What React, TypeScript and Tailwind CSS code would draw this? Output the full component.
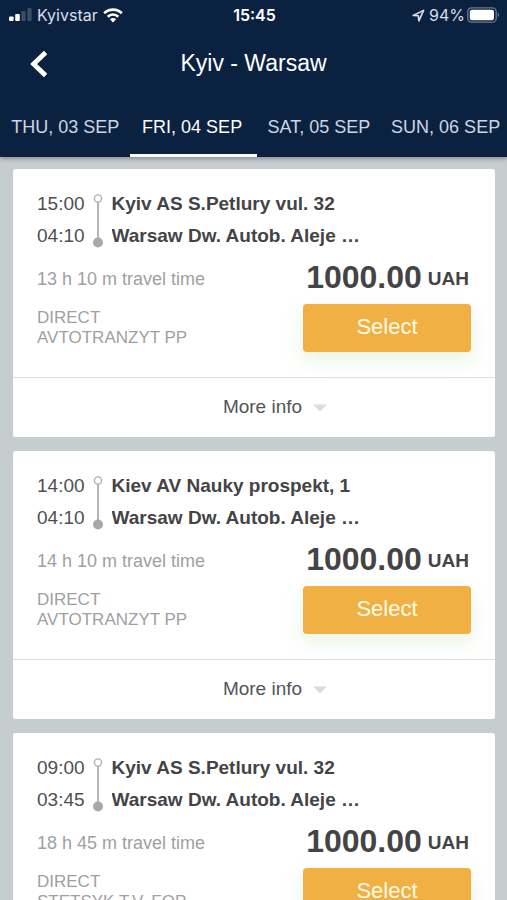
import clsx from 'clsx'

const days = ['THU, 03 SEP', 'FRI, 04 SEP', 'SAT, 05 SEP', 'SUN, 06 SEP']
const activeDay = 'FRI, 04 SEP'

const trips = [
  {
    id: 1,
    departure: '15:00',
    arrival: '04:10',
    from: 'Kyiv AS S.Petlury vul. 32',
    to: 'Warsaw Dw. Autob. Aleje …',
    duration: '13 h 10 m travel time',
    carrier: 'AVTOTRANZYT PP',
    price: '1000.00'
  },
  {
    id: 2,
    departure: '14:00',
    arrival: '04:10',
    from: 'Kiev AV Nauky prospekt, 1',
    to: 'Warsaw Dw. Autob. Aleje …',
    duration: '14 h 10 m travel time',
    carrier: 'AVTOTRANZYT PP',
    price: '1000.00'
  },
  {
    id: 3,
    departure: '09:00',
    arrival: '03:45',
    from: 'Kyiv AS S.Petlury vul. 32',
    to: 'Warsaw Dw. Autob. Aleje …',
    duration: '18 h 45 m travel time',
    carrier: 'STETSYK T.V. FOP',
    price: '1000.00'
  }
]

type Trip = (typeof trips)[number]

function StatusBar() {
  return (
    <div className="grid grid-cols-3 items-center h-[30px] pl-[9px] pr-[7px] text-base leading-5 font-['Inter','Liberation_Sans',sans-serif]">
      <div className="flex items-center gap-[5px] text-[#d9deea]">
        <svg width="23" height="14" viewBox="0 0 23 14" fill="#fff" aria-hidden="true">
          <rect x="0" y="8.5" width="4.6" height="4.5" rx="1" />
          <rect x="6.2" y="6" width="4.6" height="7" rx="1" />
          <rect x="12.4" y="3" width="4.2" height="10" rx="1" opacity="0.2" />
          <rect x="18.4" y="0" width="4.2" height="13" rx="1" opacity="0.2" />
        </svg>
        <span>Kyivstar</span>
        <svg width="20" height="15" viewBox="0 0 20 15" aria-hidden="true">
          <path d="M1.2 5.2A12.6 12.6 0 0 1 18.8 5.2" fill="none" stroke="#fff" strokeWidth="2.7" />
          <path d="M4.7 8.7A7.6 7.6 0 0 1 15.3 8.7" fill="none" stroke="#fff" strokeWidth="2.6" />
          <path d="M10 14.4L6.9 11.3A4.4 4.4 0 0 1 13.1 11.3Z" fill="#fff" />
        </svg>
      </div>
      <span className="text-center font-semibold text-white">15:45</span>
      <div className="flex items-center justify-end text-[#d9deea]">
        <svg className="mr-1" width="13" height="13" viewBox="0 0 13 13" aria-hidden="true">
          <path d="M1.2 6.5L11.6 1.4L6.9 11.8L6.3 6.8Z" fill="none" stroke="#d9deea" strokeWidth="1.6" strokeLinejoin="round" />
        </svg>
        <span>94%</span>
        <svg className="ml-0.5" width="33" height="16" viewBox="0 0 33 16" aria-hidden="true">
          <rect x="0.8" y="0.8" width="28.4" height="14.4" rx="4" fill="none" stroke="#6d7a8f" strokeWidth="1.3" />
          <rect x="2.8" y="2.8" width="24.2" height="10.4" rx="2.2" fill="#fff" />
          <path d="M30.8 5.6C32.6 6.4 32.6 9.6 30.8 10.4Z" fill="#6d7a8f" />
        </svg>
      </div>
    </div>
  )
}

function Header() {
  return (
    <header className="relative z-10 shrink-0 bg-[#0a2240] shadow-[0_1px_5px_rgba(0,0,0,0.4)]">
      <StatusBar />
      <div className="grid grid-cols-[56px_1fr_56px] items-center h-[67px] text-white">
        <button type="button" aria-label="Back" className="flex justify-end pr-2">
          <svg width="18" height="28" viewBox="0 0 18 28" aria-hidden="true">
            <path d="M15.6 2.4L3.6 14L15.6 25.6" fill="none" stroke="#fff" strokeWidth="4.8" />
          </svg>
        </button>
        <h1 className="pb-0.5 text-center text-[23px] leading-7">Kyiv - Warsaw</h1>
      </div>
      <nav className="overflow-hidden">
        <div className="flex ml-[3px] -mr-[3px]">
          {days.map((day) => (
            <button
              key={day}
              type="button"
              className={clsx(
                'w-1/4 shrink-0 h-[60px] pt-0.5 pr-0.5 border-b-[3px] text-lg whitespace-nowrap',
                day === activeDay ? 'border-white text-white' : 'border-transparent text-[#ced5e3]'
              )}
            >
              {day}
            </button>
          ))}
        </div>
      </nav>
    </header>
  )
}

function TripCard({ trip }: { trip: Trip }) {
  return (
    <article className="shrink-0 bg-white rounded-[3px]">
      <div className="px-6 pt-[19px] pb-[25px]">
        <div className="flex text-[19px] leading-8 text-[#444446]">
          <div className="text-[#4f4f51]">
            <p>{trip.departure}</p>
            <p>{trip.arrival}</p>
          </div>
          <svg className="mt-[5px] ml-[7px] mr-2 shrink-0" width="12" height="56" viewBox="0 0 12 56" aria-hidden="true">
            <path d="M6 9V46" stroke="#b4b4b6" strokeWidth="2" />
            <circle cx="6" cy="5.5" r="3.6" fill="#fff" stroke="#b0b0b2" strokeWidth="1.4" />
            <circle cx="6" cy="49.5" r="5" fill="#a8a8aa" />
          </svg>
          <div className="min-w-0 font-bold">
            <p className="truncate">{trip.from}</p>
            <p className="truncate">{trip.to}</p>
          </div>
        </div>

        <div className="flex justify-between">
          <div className="pt-[15px] text-[#a0a0a2]">
            <p className="text-lg leading-6">{trip.duration}</p>
            <p className="mt-[17px] text-[17px] leading-5">DIRECT</p>
            <p className="text-[17px] leading-5">{trip.carrier}</p>
          </div>
          <div className="w-[168px]">
            <p className="mb-[2px] pr-0.5 flex items-center justify-end gap-1.5 whitespace-nowrap font-bold text-[#444446]">
              <span className="text-[32px] leading-[50px]">{trip.price}</span>
              <span className="pt-1 text-[19px] leading-6">UAH</span>
            </p>
            <button
              type="button"
              className="w-full h-12 pb-1 rounded bg-[#f0b043] text-[22px] text-[#fffbe6] shadow-[0_8px_20px_rgba(130,190,90,0.18)]"
            >
              Select
            </button>
          </div>
        </div>
      </div>

      <button
        type="button"
        className="w-full h-[60px] flex items-center justify-center gap-[11px] border-t border-[#dcdfe0] bg-white rounded-b-[3px] text-[19px] text-[#545456]"
      >
        <span className="pl-[42px]">More info</span>
        <svg width="14" height="8" viewBox="0 0 14 8" aria-hidden="true">
          <path d="M0 0.5H14L7 7.5Z" fill="#dcdcdc" />
        </svg>
      </button>
    </article>
  )
}

function App() {
  return (
    <div className="flex flex-col h-screen bg-[#c5cdce] font-['Liberation_Sans',Arial,sans-serif]">
      <Header />
      <main className="flex-1 min-h-0 overflow-y-auto [scrollbar-width:none] flex flex-col gap-3.5 pl-[13px] pr-3 py-3">
        {trips.map((trip) => (
          <TripCard key={trip.id} trip={trip} />
        ))}
      </main>
    </div>
  )
}

export default App
